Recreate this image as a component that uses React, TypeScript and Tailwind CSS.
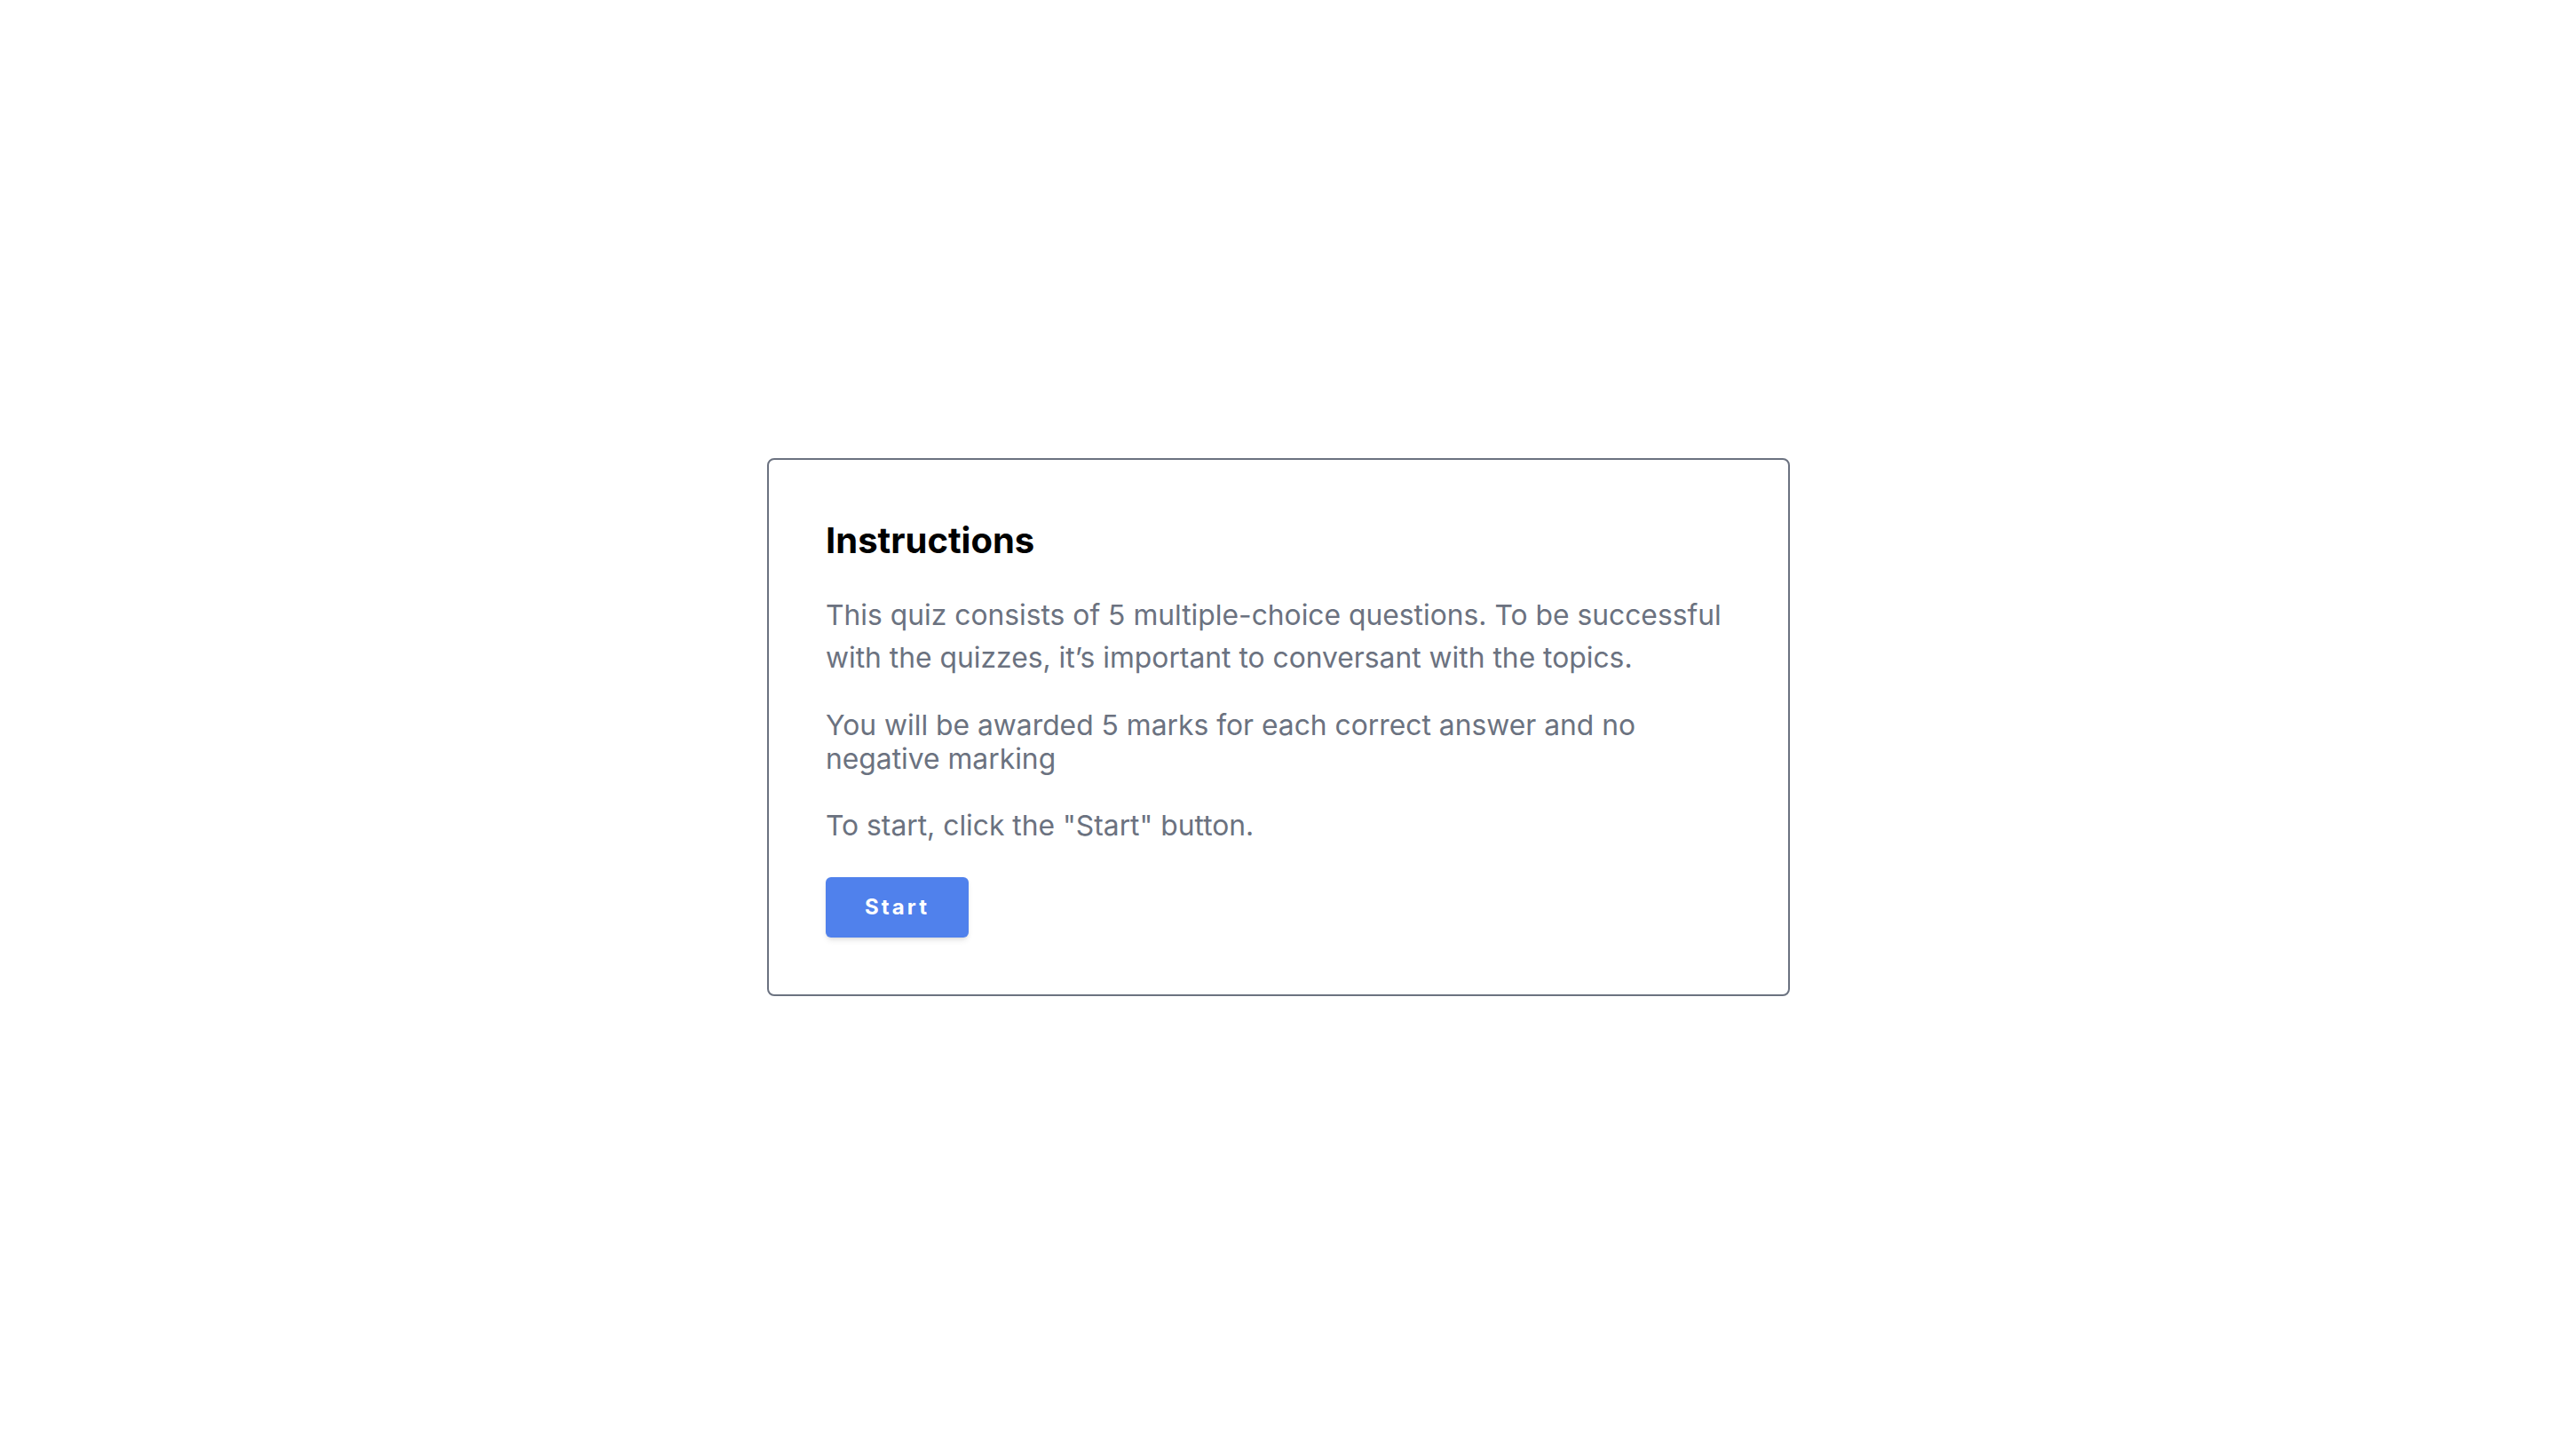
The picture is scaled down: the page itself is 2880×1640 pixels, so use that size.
export default function App() {
  return (
    <div className="min-h-screen w-full bg-white flex items-center justify-center pb-[2px] font-['Inter',sans-serif]">
      <div className="w-[1152px] border-2 border-[#6b7280] rounded-lg bg-white px-16 pt-[67px] pb-16 flex flex-col items-start">
        <h1 className="text-[40px] leading-[48px] font-bold text-black mb-[36px]">Instructions</h1>

        <p className="text-[31.8px] leading-[48px] text-[#6b7280] mb-[33px]">
          This quiz consists of 5 multiple-choice questions. To be successful with the quizzes, it’s
          important to conversant with the topics.
        </p>

        <p className="text-[31.8px] leading-[38px] text-[#6b7280] mb-8">
          You will be awarded 5 marks for each correct answer and no negative marking
        </p>

        <p className="text-[31.8px] leading-[48px] text-[#6b7280] mb-[34px]">
          To start, click the "Start" button.
        </p>

        <button
          type="button"
          className="h-[68px] w-[161px] rounded-md bg-[#5081ec] text-white text-[24px] font-bold tracking-[0.13em] shadow-md flex items-center justify-center"
        >
          Start
        </button>
      </div>
    </div>
  );
}
